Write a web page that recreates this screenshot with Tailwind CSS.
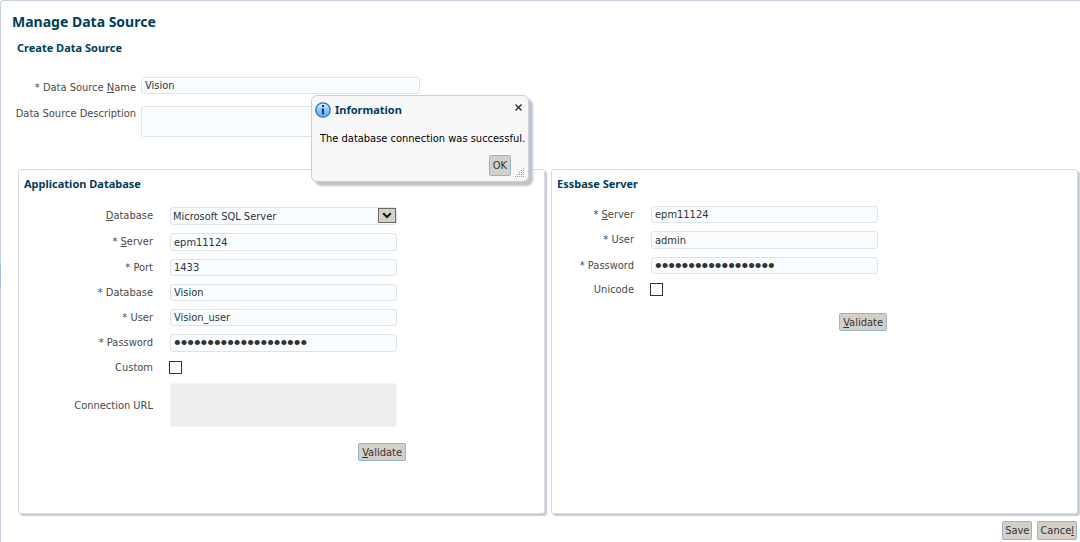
<!DOCTYPE html>
<html lang="en">
<head>
    <meta charset="UTF-8">
    <meta name="viewport" content="width=device-width, initial-scale=1">
    <title>Manage Data Source</title>
    <script src="https://cdn.jsdelivr.net/npm/@tailwindcss/browser@4"></script>
</head>
<body class="bg-white font-['DejaVu_Sans_Condensed',sans-serif] text-[11px] leading-4 text-[#4a4a4a]">
    <!-- Page frame -->
    <div class="relative min-h-screen rounded-tl border-t border-l border-[#c4cfdf] pt-3 pr-0.5 pl-[11px]">
        <!-- Splitter handle -->
        <div class="absolute top-[264px] -left-px h-[22px] w-px bg-[#9dbce4]"></div>

        <h1 class="font-['Noto_Sans',sans-serif] text-[14px] leading-[18px] font-bold text-[#003d5b]">Manage Data Source</h1>
        <h2 class="mt-[9px] pl-[5px] font-['Noto_Sans',sans-serif] leading-4 font-bold text-[#003d5b]">Create Data Source</h2>

        <!-- Data source name and description -->
        <div class="mt-[21px] grid grid-cols-[124px_minmax(0,279px)] items-start gap-x-[5px] gap-y-[10px]">
            <label for="dsName" class="pt-[3px] text-right whitespace-nowrap"><span class="text-[#1f4f82]">*</span> Data Source <u>N</u>ame</label>
            <input id="dsName" type="text" value="Vision" class="h-[17px] w-full rounded-[3px] border border-[#dce3e9] bg-[#f9fdff] px-[3px] text-[#333]">
            <label for="dsDesc" class="text-right whitespace-nowrap">Data Source Description</label>
            <textarea id="dsDesc" class="block h-[31px] w-full resize-none rounded-[3px] border border-[#dce3e9] bg-[#f9fdff] px-[3px] text-[#333]"></textarea>
        </div>

        <!-- Panels -->
        <div class="mt-8 flex gap-[6px] pl-1.5">
            <!-- Application database -->
            <section class="min-h-[345px] flex-1 rounded-[3px] border border-[#d3dce6] bg-white pt-1.5 shadow-[2px_2px_1px_#c9cccf]">
                <h2 class="pl-[5px] font-['Noto_Sans',sans-serif] font-bold text-[#003d5b]">Application Database</h2>
                <div class="mt-[15px] grid grid-cols-[134px_227px] gap-x-[17px] gap-y-2 leading-[17px]">
                    <label for="dbType" class="text-right"><u>D</u>atabase</label>
                    <div class="relative">
                        <select id="dbType" class="block h-[18px] w-full appearance-none rounded-[3px] border border-[#dce3e9] bg-[#f9fdff] pr-5 pl-0.5 text-[#333]">
                            <option>Microsoft SQL Server</option>
                        </select>
                        <svg class="pointer-events-none absolute top-px right-px h-[15px] w-[18px]" viewBox="0 0 18 15" fill="none">
                            <rect x=".5" y=".5" width="17" height="14" fill="#d4d0c8" stroke="#6b6b6b"/>
                            <path d="M5.2 5.2 9 9l3.800-3.800" stroke="#111" stroke-width="2"/>
                        </svg>
                    </div>
                    <label for="dbServer" class="text-right"><span class="text-[#1f4f82]">*</span> <u>S</u>erver</label>
                    <input id="dbServer" type="text" value="epm11124" class="h-[18px] w-full rounded-[3px] border border-[#dce3e9] bg-[#f9fdff] px-[3px] text-[#333]">
                    <label for="dbPort" class="text-right"><span class="text-[#1f4f82]">*</span> Port</label>
                    <input id="dbPort" type="text" value="1433" class="h-[17px] w-full rounded-[3px] border border-[#dce3e9] bg-[#f9fdff] px-[3px] text-[#333]">
                    <label for="dbName" class="text-right"><span class="text-[#1f4f82]">*</span> Database</label>
                    <input id="dbName" type="text" value="Vision" class="h-[17px] w-full rounded-[3px] border border-[#dce3e9] bg-[#f9fdff] px-[3px] text-[#333]">
                    <label for="dbUser" class="text-right"><span class="text-[#1f4f82]">*</span> User</label>
                    <input id="dbUser" type="text" value="Vision_user" class="h-[17px] w-full rounded-[3px] border border-[#dce3e9] bg-[#f9fdff] px-[3px] text-[#333]">
                    <label for="dbPassword" class="text-right"><span class="text-[#1f4f82]">*</span> Password</label>
                    <input id="dbPassword" type="password" value="12345678901234567890" class="h-[18px] w-full rounded-[3px] border border-[#dce3e9] bg-[#f9fdff] px-[3px] font-['Liberation_Sans',sans-serif] text-[19px] text-[#333]">
                    <label for="custom" class="text-right leading-[15px]">Custom</label>
                    <div class="flex h-[15px] items-center">
                        <input id="custom" type="checkbox" class="-ml-px size-[13px] appearance-none border border-[#333] bg-white checked:bg-[#333]">
                    </div>
                    <label for="connUrl" class="self-center text-right whitespace-nowrap">Connection URL</label>
                    <textarea id="connUrl" readonly class="block h-[44px] w-full resize-none rounded-[3px] border border-[#f3f3f4] bg-[#eeeef0]"></textarea>
                </div>
                <div class="mt-4 flex w-[387px] justify-end">
                    <button type="button" class="h-[18px] rounded-[2px] border border-[#94b4d2] bg-[#d4d0c8] px-[3px] leading-[17px] text-[#333]"><u>V</u>alidate</button>
                </div>
            </section>

            <!-- Essbase server -->
            <section class="min-h-[345px] flex-1 rounded-[3px] border border-[#d3dce6] bg-white pt-1.5 shadow-[2px_2px_1px_#c9cccf]">
                <h2 class="pl-[5px] font-['Noto_Sans',sans-serif] font-bold text-[#003d5b]">Essbase Server</h2>
                <div class="mt-3.5 grid grid-cols-[82px_227px] gap-x-[17px] gap-y-2 leading-[17px]">
                    <label for="esServer" class="text-right"><span class="text-[#1f4f82]">*</span> <u>S</u>erver</label>
                    <input id="esServer" type="text" value="epm11124" class="h-[17px] w-full rounded-[3px] border border-[#dce3e9] bg-[#f9fdff] px-[3px] text-[#333]">
                    <label for="esUser" class="text-right"><span class="text-[#1f4f82]">*</span> User</label>
                    <input id="esUser" type="text" value="admin" class="h-[18px] w-full rounded-[3px] border border-[#dce3e9] bg-[#f9fdff] px-[3px] text-[#333]">
                    <label for="esPassword" class="text-right"><span class="text-[#1f4f82]">*</span> Password</label>
                    <input id="esPassword" type="password" value="123456789012345678" class="h-[17px] w-full rounded-[3px] border border-[#dce3e9] bg-[#f9fdff] px-[3px] font-['Liberation_Sans',sans-serif] text-[19px] text-[#333]">
                    <label for="unicode" class="text-right leading-[15px]">Unicode</label>
                    <div class="flex h-[15px] items-center">
                        <input id="unicode" type="checkbox" class="-ml-px size-[13px] appearance-none border border-[#333] bg-white checked:bg-[#333]">
                    </div>
                </div>
                <div class="mt-4 flex w-[335px] justify-end">
                    <button type="button" class="h-[18px] rounded-[2px] border border-[#94b4d2] bg-[#d4d0c8] px-[3px] leading-[17px] text-[#333]"><u>V</u>alidate</button>
                </div>
            </section>
        </div>

        <!-- Page actions -->
        <div class="mt-[7px] flex justify-end gap-[5px] pr-px">
            <button type="button" class="h-[19px] rounded-[2px] border border-[#94b4d2] bg-[#d4d0c8] px-0.5 leading-[17px] text-[#333]">Save</button>
            <button type="button" class="h-[19px] rounded-[2px] border border-[#94b4d2] bg-[#d4d0c8] px-0.5 leading-[17px] text-[#333]">Cance<u>l</u></button>
        </div>

        <!-- Information dialog -->
        <div role="dialog" aria-labelledby="infoTitle" class="absolute top-[94px] left-[310px] w-[218px] rounded-md border border-[#c3d0df] bg-[#f8f8f8] pb-[5px] shadow-[4px_4px_2px_#c4c4c4]">
            <div class="flex items-center pt-1.5 pr-1.5 pl-[3px]">
                <svg class="size-4" viewBox="0 0 16 16">
                    <defs>
                        <linearGradient id="infoFill" x1="0" y1="0" x2="0" y2="1">
                            <stop offset="0" stop-color="#d9f0ff"/>
                            <stop offset=".5" stop-color="#8ccaf8"/>
                            <stop offset="1" stop-color="#55b0f3"/>
                        </linearGradient>
                    </defs>
                    <circle cx="8" cy="8" r="7.200" fill="url(#infoFill)" stroke="#2f6fb5" stroke-width="1.300"/>
                    <path d="M7 3h2v2H7zM6.500 6.500H9V12H7V7.500h-.5zM6.500 11.500h3v.8h-3z" fill="#123f8c"/>
                </svg>
                <h2 id="infoTitle" class="ml-1 flex-1 font-['Noto_Sans',sans-serif] font-bold text-[#003d5b]">Information</h2>
                <button type="button" aria-label="Close" class="self-start pt-0.5">
                    <svg class="size-[7px]" viewBox="0 0 7 7"><path d="M.5.5l6 6M6.500.5l-6 6" stroke="#222" stroke-width="1.200"/></svg>
                </button>
            </div>
            <p class="mt-[13px] pl-2 whitespace-nowrap text-black">The database connection was successful.</p>
            <div class="mt-2 flex items-end justify-end gap-1 pr-1">
                <button type="button" class="h-[21px] rounded-[2px] border border-[#94b4d2] bg-[#d4d0c8] px-[3px] leading-4 text-[#333]">OK</button>
                <!-- Resize grip -->
                <svg class="-mb-px size-[9px]" viewBox="0 0 9 9" fill="#999">
                    <path d="M8 0h1v1H8zM6 2h1v1H6zM8 2h1v1H8zM4 4h1v1H4zM6 4h1v1H6zM8 4h1v1H8zM2 6h1v1H2zM4 6h1v1H4zM6 6h1v1H6zM8 6h1v1H8zM0 8h1v1H0zM2 8h1v1H2zM4 8h1v1H4zM6 8h1v1H6zM8 8h1v1H8z"/>
                </svg>
            </div>
        </div>
    </div>
</body>
</html>
